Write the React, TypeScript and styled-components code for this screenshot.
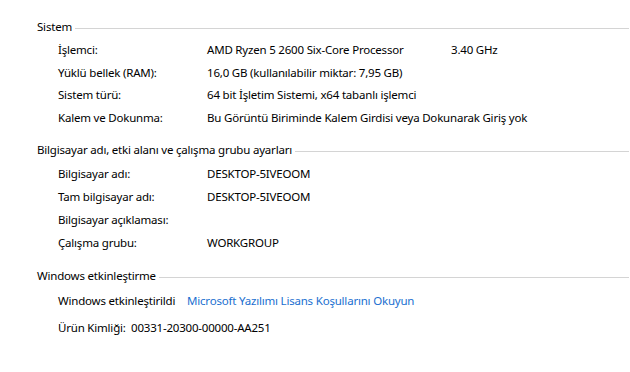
import React from "react";
import styled, { createGlobalStyle } from "styled-components";

const Global = createGlobalStyle`
  html, body { margin: 0; padding: 0; background: #ffffff; }
  body {
    font-family: "Noto Sans", "Open Sans", sans-serif;
    font-size: 11.5px;
    letter-spacing: -0.2px;
    color: #000;
  }
`;

const Page = styled.div`
  width: 630px;
  height: 372px;
  padding: 16px 1px 0 37px;
  box-sizing: border-box;
  display: flex;
  flex-direction: column;
  overflow: hidden;
`;

const Section = styled.section<{ $top?: number }>`
  display: flex;
  flex-direction: column;
  margin-top: ${(p) => p.$top ?? 0}px;
`;

const Header = styled.div`
  display: flex;
  align-items: center;
  gap: 3px;
  height: 22px;
  line-height: 22px;
  white-space: nowrap;
`;

const Rule = styled.div`
  flex: 1;
  height: 1px;
  background: #d4d4d4;
  margin-top: 2px;
`;

const Rows = styled.div<{ $gap?: number; $top?: number }>`
  display: flex;
  flex-direction: column;
  padding-left: 21px;
  padding-top: ${(p) => p.$top ?? 0}px;
  gap: ${(p) => p.$gap ?? 0}px;
`;

const Row = styled.div<{ $h: number }>`
  display: flex;
  align-items: center;
  height: ${(p) => p.$h}px;
  white-space: nowrap;
`;

const Label = styled.span<{ $w?: number }>`
  width: ${(p) => p.$w ?? 149}px;
  flex: none;
`;

const Value = styled.span<{ $w?: number }>`
  min-width: ${(p) => (p.$w ? `${p.$w}px` : "auto")};
`;

const Link = styled.a`
  color: #1a6fd0;
  text-decoration: none;
  cursor: pointer;
`;

const sys = [
  ["İşlemci:", "AMD Ryzen 5 2600 Six-Core Processor", "3.40 GHz"],
  ["Yüklü bellek (RAM):", "16,0 GB (kullanılabilir miktar: 7,95 GB)"],
  ["Sistem türü:", "64 bit İşletim Sistemi, x64 tabanlı işlemci"],
  ["Kalem ve Dokunma:", "Bu Görüntü Biriminde Kalem Girdisi veya Dokunarak Giriş yok"],
];

const comp = [
  ["Bilgisayar adı:", "DESKTOP-5IVEOOM"],
  ["Tam bilgisayar adı:", "DESKTOP-5IVEOOM"],
  ["Bilgisayar açıklaması:", ""],
  ["Çalışma grubu:", "WORKGROUP"],
];

export default function App() {
  return (
    <>
      <Global />
      <Page>
        <Section>
          <Header>
            <span>Sistem</span>
            <Rule />
          </Header>
          <Rows $top={0.5}>
            {sys.map(([l, v, e]) => (
              <Row key={l} $h={22.5}>
                <Label>{l}</Label>
                <Value $w={e ? 244 : undefined}>{v}</Value>
                {e && <Value>{e}</Value>}
              </Row>
            ))}
          </Rows>
        </Section>
        <Section $top={10.5}>
          <Header>
            <span>Bilgisayar adı, etki alanı ve çalışma grubu ayarları</span>
            <Rule />
          </Header>
          <Rows $top={1}>
            {comp.map(([l, v]) => (
              <Row key={l} $h={23}>
                <Label>{l}</Label>
                <Value>{v}</Value>
              </Row>
            ))}
          </Rows>
        </Section>
        <Section $top={11}>
          <Header>
            <span>Windows etkinleştirme</span>
            <Rule />
          </Header>
          <Rows $gap={3} $top={1}>
            <Row $h={24}>
              <Label $w={129}>Windows etkinleştirildi</Label>
              <Link>Microsoft Yazılımı Lisans Koşullarını Okuyun</Link>
            </Row>
            <Row $h={24}>
              <Label $w={73}>Ürün Kimliği:</Label>
              <Value>00331-20300-00000-AA251</Value>
            </Row>
          </Rows>
        </Section>
      </Page>
    </>
  );
}
